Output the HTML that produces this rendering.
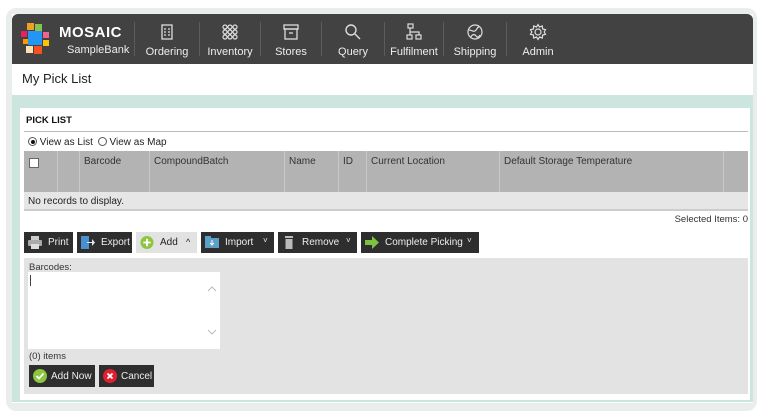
<!DOCTYPE html>
<html><head><meta charset="utf-8"><style>
*{box-sizing:border-box;margin:0;padding:0}
body{width:763px;height:416px;background:#fff;font-family:"Liberation Sans",sans-serif;position:relative;overflow:hidden;color:#222}
.a{position:absolute}
.frame{left:6px;top:8px;width:751px;height:403px;border-radius:10px;background:#e9eeec}
.nav{left:12px;top:14px;width:741px;height:50px;background:#424242;border-radius:6px 6px 0 0}
.ni{position:absolute;top:0;height:50px;color:#eee;font-size:11px;text-align:center}
.ni span{position:absolute;bottom:6px;left:0;right:0}
.ni svg{position:absolute;top:9px;left:50%;margin-left:-9px}
.sep{position:absolute;top:8px;width:1px;height:34px;background:#5c5c5c}
.btn{position:absolute;top:232px;height:21px;background:#2e2e2e;color:#eee;font-size:10px;display:flex;align-items:center;padding-left:24px;white-space:nowrap}
.ic{position:absolute;left:4px;top:4px;width:14px;height:13px}
.hd{position:absolute;top:151px;height:41px;background:#b3b3b3;border-right:1px solid #c9c9c9;font-size:10px;color:#333;padding:5px 0 0 4px}
</style></head><body>
<div class="a frame"></div>
<div class="a" style="left:12px;top:14px;width:741px;height:389px;background:#fff"></div>
<div class="a nav">
 <div class="a" style="left:9px;top:9px;width:32px;height:32px">
  <div class="a" style="left:6px;top:0;width:7px;height:7px;background:#f0a020"></div>
  <div class="a" style="left:14px;top:1px;width:7px;height:7px;background:#8bc34a"></div>
  <div class="a" style="left:0;top:8px;width:6px;height:6px;background:#e91e63"></div>
  <div class="a" style="left:7px;top:8px;width:14px;height:14px;background:#2196f3"></div>
  <div class="a" style="left:22px;top:9px;width:6px;height:6px;background:#f06292"></div>
  <div class="a" style="left:2px;top:16px;width:5px;height:5px;background:#ff9800"></div>
  <div class="a" style="left:22px;top:17px;width:6px;height:6px;background:#ffc107"></div>
  <div class="a" style="left:5px;top:23px;width:7px;height:7px;background:#ffe0b2"></div>
  <div class="a" style="left:13px;top:23px;width:8px;height:8px;background:#f4511e"></div>
 </div>
 <div class="a" style="left:47px;top:10px;color:#fff;font-weight:bold;font-size:15px;letter-spacing:0.5px">MOSAIC</div>
 <div class="a" style="left:55px;top:30px;color:#eee;font-size:11px">SampleBank</div>
 <div class="sep" style="left:122px"></div>
 <div class="ni" style="left:124px;width:62px"><svg width="18" height="18" viewBox="0 0 18 18" fill="none" stroke="#ddd" stroke-width="1.3"><rect x="4" y="2" width="10" height="14"/><path d="M6 6h2M10 6h2M6 9h2M10 9h2M6 12h2M10 12h2"/></svg><span>Ordering</span></div>
 <div class="sep" style="left:187px"></div>
 <div class="ni" style="left:188px;width:60px"><svg width="18" height="18" viewBox="0 0 18 18" fill="none" stroke="#ddd" stroke-width="1.2"><circle cx="4" cy="4" r="2"/><circle cx="9" cy="4" r="2"/><circle cx="14" cy="4" r="2"/><circle cx="4" cy="9" r="2"/><circle cx="9" cy="9" r="2"/><circle cx="14" cy="9" r="2"/><circle cx="4" cy="14" r="2"/><circle cx="9" cy="14" r="2"/><circle cx="14" cy="14" r="2"/></svg><span>Inventory</span></div>
 <div class="sep" style="left:248px"></div>
 <div class="ni" style="left:250px;width:58px"><svg width="18" height="18" viewBox="0 0 18 18" fill="none" stroke="#ddd" stroke-width="1.3"><rect x="2" y="2" width="14" height="4"/><rect x="3" y="6" width="12" height="10"/><path d="M7 10h4"/></svg><span>Stores</span></div>
 <div class="sep" style="left:309px"></div>
 <div class="ni" style="left:310px;width:62px"><svg width="18" height="18" viewBox="0 0 18 18" fill="none" stroke="#ddd" stroke-width="1.4"><circle cx="7" cy="7" r="5"/><path d="M11 11l5 5"/></svg><span>Query</span></div>
 <div class="sep" style="left:372px"></div>
 <div class="ni" style="left:373px;width:58px"><svg width="18" height="18" viewBox="0 0 18 18" fill="none" stroke="#ddd" stroke-width="1.2"><rect x="3" y="1" width="5" height="4"/><rect x="2" y="12" width="5" height="4"/><rect x="11" y="12" width="5" height="4"/><path d="M5 5v4h9v3M5 9v3"/></svg><span>Fulfilment</span></div>
 <div class="sep" style="left:431px"></div>
 <div class="ni" style="left:432px;width:62px"><svg width="18" height="18" viewBox="0 0 18 18" fill="none" stroke="#ddd" stroke-width="1.2"><circle cx="9" cy="9" r="7"/><path d="M3 7c3 0 4 2 6 1s2-4 4-4M5 14c1-3 4-3 5-1s3 1 4-1"/></svg><span>Shipping</span></div>
 <div class="sep" style="left:494px"></div>
 <div class="ni" style="left:496px;width:60px"><svg width="18" height="18" viewBox="0 0 18 18" fill="none" stroke="#ddd" stroke-width="1.2"><circle cx="9" cy="9" r="3"/><path d="M9 1.5l1.5 2.5 2.8-1 .3 3 2.9.7-1.3 2.3 1.3 2.3-2.9.7-.3 3-2.8-1L9 16.5l-1.5-2.5-2.8 1-.3-3-2.9-.7L2.8 9 1.5 6.7l2.9-.7.3-3 2.8 1z"/></svg><span>Admin</span></div>
</div>
<div class="a" style="left:22px;top:71px;font-size:13px;color:#222">My Pick List</div>
<div class="a" style="left:12px;top:95px;width:741px;height:307px;background:#cde5df"></div>
<div class="a" style="left:20px;top:108px;width:730px;height:292px;background:#fff"></div>
<div class="a" style="left:26px;top:115px;font-size:9.5px;font-weight:bold;color:#111">PICK LIST</div>
<div class="a" style="left:24px;top:131px;width:724px;height:1px;background:#bbb"></div>
<div class="a" style="left:28px;top:137px;font-size:10px;color:#222">
 <span style="display:inline-block;width:9px;height:9px;border:1px solid #555;border-radius:50%;vertical-align:-1px;position:relative"><span style="position:absolute;left:1.5px;top:1.5px;width:4px;height:4px;border-radius:50%;background:#111"></span></span> View as List
 <span style="display:inline-block;width:9px;height:9px;border:1px solid #555;border-radius:50%;vertical-align:-1px;margin-left:2px"></span> View as Map</div>
<div class="hd" style="left:24px;width:34px"><span style="display:inline-block;width:10px;height:10px;background:#fff;border:1px solid #666;margin:2px 0 0 1px"></span></div>
<div class="hd" style="left:58px;width:22px"></div>
<div class="hd" style="left:80px;width:70px">Barcode</div>
<div class="hd" style="left:150px;width:135px">CompoundBatch</div>
<div class="hd" style="left:285px;width:54px">Name</div>
<div class="hd" style="left:339px;width:28px">ID</div>
<div class="hd" style="left:367px;width:133px">Current Location</div>
<div class="hd" style="left:500px;width:224px">Default Storage Temperature</div>
<div class="hd" style="left:724px;width:24px;border:none"></div>
<div class="a" style="left:24px;top:192px;width:724px;height:19px;background:#e6e6e6;border-bottom:2px solid #ccc;font-size:10px;padding:4px 0 0 4px">No records to display.</div>
<div class="a" style="left:600px;top:214px;width:148px;text-align:right;font-size:9.5px;color:#333">Selected Items: 0</div>
<div class="btn" style="left:24px;width:49px"><svg class="ic" viewBox="0 0 14 13"><rect x="3" y="0" width="8" height="4" fill="#ccc"/><rect x="0" y="4" width="14" height="6" rx="1" fill="#aaa"/><rect x="3" y="8" width="8" height="5" fill="#ddd"/></svg>Print</div>
<div class="btn" style="left:77px;width:55px"><svg class="ic" viewBox="0 0 14 13"><rect x="0" y="0" width="8" height="13" fill="#4a8fd0"/><path d="M6 6h5V3l3 3.5-3 3.5V7H6z" fill="#e0e8f0"/></svg>Export</div>
<div class="btn" style="left:136px;width:61px;background:#e2e2e2;color:#222"><svg class="ic" viewBox="0 0 14 14"><circle cx="7" cy="7" r="7" fill="#8cc63f"/><path d="M7 3v8M3 7h8" stroke="#fff" stroke-width="2"/></svg>Add<span style="position:absolute;left:50px;top:5px;font-size:9px">^</span></div>
<div class="btn" style="left:201px;width:73px"><svg class="ic" viewBox="0 0 14 13"><rect x="0" y="2" width="14" height="10" fill="#5aa0c8"/><rect x="0" y="0" width="6" height="3" fill="#5aa0c8"/><path d="M7 4v5M5 7l2 2 2-2" stroke="#fff" fill="none"/></svg>Import<span style="position:absolute;left:62px;top:4px;font-size:8px">&#709;</span></div>
<div class="btn" style="left:278px;width:79px"><svg class="ic" viewBox="0 0 14 13"><rect x="3" y="0" width="8" height="2" fill="#bbb"/><rect x="3.5" y="3" width="7" height="10" fill="#bbb"/></svg>Remove<span style="position:absolute;left:68px;top:4px;font-size:8px">&#709;</span></div>
<div class="btn" style="left:361px;width:118px"><svg class="ic" viewBox="0 0 14 13"><path d="M0 4h7V0l7 6.5L7 13V9H0z" fill="#7cc242"/></svg>Complete Picking<span style="position:absolute;left:106px;top:4px;font-size:8px">&#709;</span></div>
<div class="a" style="left:24px;top:258px;width:724px;height:136px;background:#e3e3e3"></div>
<div class="a" style="left:29px;top:262px;font-size:9.5px;color:#333">Barcodes:</div>
<div class="a" style="left:28px;top:272px;width:192px;height:77px;background:#fff"><div class="a" style="left:2px;top:3px;width:1px;height:11px;background:#444"></div><svg class="a" style="left:179px;top:14px" width="10" height="6"><path d="M1 5l4-4 4 4" stroke="#bbb" fill="none"/></svg><svg class="a" style="left:179px;top:57px" width="10" height="6"><path d="M1 1l4 4 4-4" stroke="#bbb" fill="none"/></svg></div>
<div class="a" style="left:29px;top:351px;font-size:9.5px;color:#333">(0) items</div>
<div class="btn" style="left:29px;top:365px;width:66px;height:22px;font-size:10px;padding-left:22px"><svg class="ic" viewBox="0 0 14 14" style="width:14px;height:14px"><circle cx="7" cy="7" r="7" fill="#8cc63f"/><path d="M3.5 7l2.5 2.5 4.5-5" stroke="#fff" stroke-width="1.8" fill="none"/></svg>Add Now</div>
<div class="btn" style="left:99px;top:365px;width:55px;height:22px;font-size:10px;padding-left:22px"><svg class="ic" viewBox="0 0 14 14" style="width:14px;height:14px"><circle cx="7" cy="7" r="7" fill="#e02030"/><path d="M4.5 4.5l5 5M9.5 4.5l-5 5" stroke="#fff" stroke-width="1.8"/></svg>Cancel</div>
</body></html>
